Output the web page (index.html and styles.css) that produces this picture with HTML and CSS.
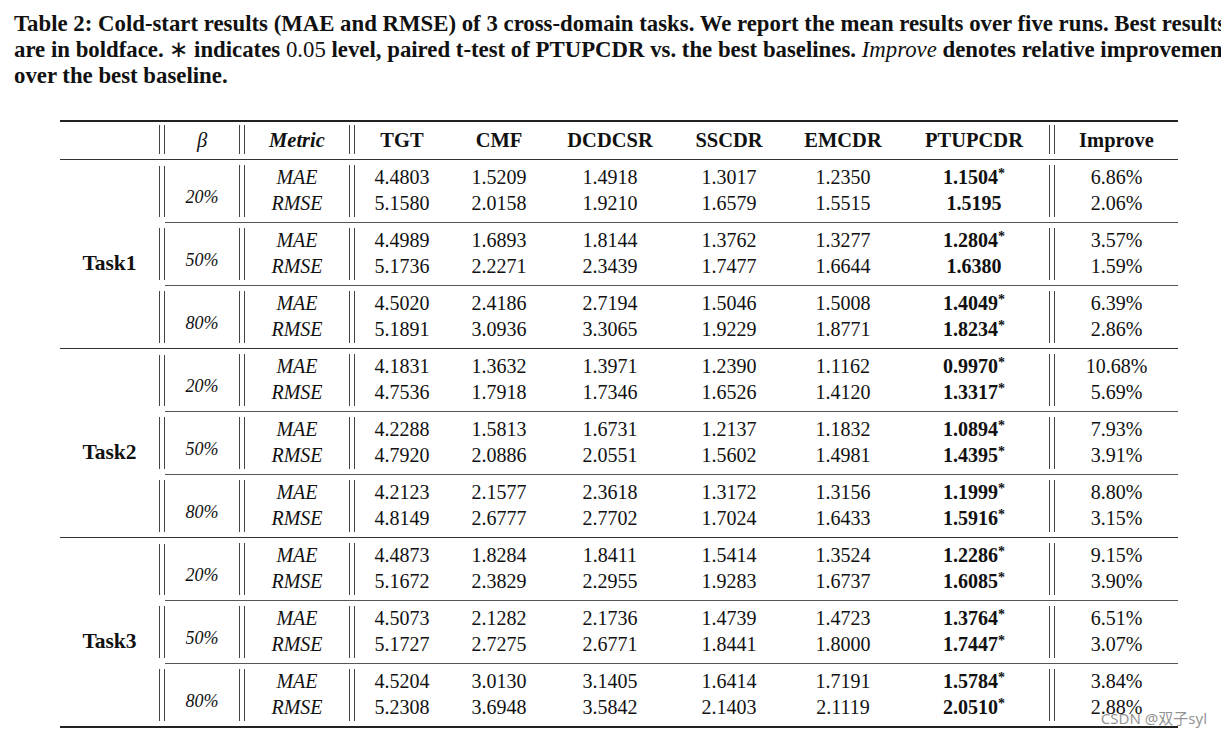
FILE: index.html
```html
<!DOCTYPE html>
<html>
<head>
<meta charset="utf-8">
<link rel="stylesheet" href="styles.css">
</head>
<body>
<p class="caption">
<span class="line">Table 2: Cold-start results (MAE and RMSE) of 3 cross-domain tasks. We report the mean results over five runs. Best results</span>
<span class="line">are in boldface. <span class="reg">∗</span> indicates <span class="reg">0.05</span> level, paired t-test of PTUPCDR vs. the best baselines. <i class="reg">Improve</i> denotes relative improvement</span>
<span class="line">over the best baseline.</span>
</p>
<div class="tbl">
  <div class="hdr">
    <div></div><div class="dbl"></div><div class="h it">β</div><div class="dbl"></div><div class="h b it">Metric</div><div class="dbl"></div>
    <div class="h b">TGT</div><div class="h b">CMF</div><div class="h b">DCDCSR</div><div class="h b">SSCDR</div><div class="h b">EMCDR</div><div class="h b">PTUPCDR</div><div class="dbl"></div><div class="h b">Improve</div>
  </div>

  <div class="task">
    <div class="tlabel">Task1</div>
    <div class="groups">
      <div class="grp"><div class="dbl"></div><div class="cells">
        <div class="beta">20%</div><div class="dbl"></div><div class="val it">MAE<br>RMSE</div><div class="dbl"></div>
        <div class="val">4.4803<br>5.1580</div><div class="val">1.5209<br>2.0158</div><div class="val">1.4918<br>1.9210</div><div class="val">1.3017<br>1.6579</div><div class="val">1.2350<br>1.5515</div><div class="val b">1.1504<sup>*</sup><br>1.5195</div><div class="dbl"></div><div class="val">6.86%<br>2.06%</div>
      </div></div>
      <div class="grp"><div class="dbl"></div><div class="cells">
        <div class="beta">50%</div><div class="dbl"></div><div class="val it">MAE<br>RMSE</div><div class="dbl"></div>
        <div class="val">4.4989<br>5.1736</div><div class="val">1.6893<br>2.2271</div><div class="val">1.8144<br>2.3439</div><div class="val">1.3762<br>1.7477</div><div class="val">1.3277<br>1.6644</div><div class="val b">1.2804<sup>*</sup><br>1.6380</div><div class="dbl"></div><div class="val">3.57%<br>1.59%</div>
      </div></div>
      <div class="grp"><div class="dbl"></div><div class="cells">
        <div class="beta">80%</div><div class="dbl"></div><div class="val it">MAE<br>RMSE</div><div class="dbl"></div>
        <div class="val">4.5020<br>5.1891</div><div class="val">2.4186<br>3.0936</div><div class="val">2.7194<br>3.3065</div><div class="val">1.5046<br>1.9229</div><div class="val">1.5008<br>1.8771</div><div class="val b">1.4049<sup>*</sup><br>1.8234<sup>*</sup></div><div class="dbl"></div><div class="val">6.39%<br>2.86%</div>
      </div></div>
    </div>
  </div>

  <div class="task">
    <div class="tlabel">Task2</div>
    <div class="groups">
      <div class="grp"><div class="dbl"></div><div class="cells">
        <div class="beta">20%</div><div class="dbl"></div><div class="val it">MAE<br>RMSE</div><div class="dbl"></div>
        <div class="val">4.1831<br>4.7536</div><div class="val">1.3632<br>1.7918</div><div class="val">1.3971<br>1.7346</div><div class="val">1.2390<br>1.6526</div><div class="val">1.1162<br>1.4120</div><div class="val b">0.9970<sup>*</sup><br>1.3317<sup>*</sup></div><div class="dbl"></div><div class="val">10.68%<br>5.69%</div>
      </div></div>
      <div class="grp"><div class="dbl"></div><div class="cells">
        <div class="beta">50%</div><div class="dbl"></div><div class="val it">MAE<br>RMSE</div><div class="dbl"></div>
        <div class="val">4.2288<br>4.7920</div><div class="val">1.5813<br>2.0886</div><div class="val">1.6731<br>2.0551</div><div class="val">1.2137<br>1.5602</div><div class="val">1.1832<br>1.4981</div><div class="val b">1.0894<sup>*</sup><br>1.4395<sup>*</sup></div><div class="dbl"></div><div class="val">7.93%<br>3.91%</div>
      </div></div>
      <div class="grp"><div class="dbl"></div><div class="cells">
        <div class="beta">80%</div><div class="dbl"></div><div class="val it">MAE<br>RMSE</div><div class="dbl"></div>
        <div class="val">4.2123<br>4.8149</div><div class="val">2.1577<br>2.6777</div><div class="val">2.3618<br>2.7702</div><div class="val">1.3172<br>1.7024</div><div class="val">1.3156<br>1.6433</div><div class="val b">1.1999<sup>*</sup><br>1.5916<sup>*</sup></div><div class="dbl"></div><div class="val">8.80%<br>3.15%</div>
      </div></div>
    </div>
  </div>

  <div class="task">
    <div class="tlabel">Task3</div>
    <div class="groups">
      <div class="grp"><div class="dbl"></div><div class="cells">
        <div class="beta">20%</div><div class="dbl"></div><div class="val it">MAE<br>RMSE</div><div class="dbl"></div>
        <div class="val">4.4873<br>5.1672</div><div class="val">1.8284<br>2.3829</div><div class="val">1.8411<br>2.2955</div><div class="val">1.5414<br>1.9283</div><div class="val">1.3524<br>1.6737</div><div class="val b">1.2286<sup>*</sup><br>1.6085<sup>*</sup></div><div class="dbl"></div><div class="val">9.15%<br>3.90%</div>
      </div></div>
      <div class="grp"><div class="dbl"></div><div class="cells">
        <div class="beta">50%</div><div class="dbl"></div><div class="val it">MAE<br>RMSE</div><div class="dbl"></div>
        <div class="val">4.5073<br>5.1727</div><div class="val">2.1282<br>2.7275</div><div class="val">2.1736<br>2.6771</div><div class="val">1.4739<br>1.8441</div><div class="val">1.4723<br>1.8000</div><div class="val b">1.3764<sup>*</sup><br>1.7447<sup>*</sup></div><div class="dbl"></div><div class="val">6.51%<br>3.07%</div>
      </div></div>
      <div class="grp"><div class="dbl"></div><div class="cells">
        <div class="beta">80%</div><div class="dbl"></div><div class="val it">MAE<br>RMSE</div><div class="dbl"></div>
        <div class="val">4.5204<br>5.2308</div><div class="val">3.0130<br>3.6948</div><div class="val">3.1405<br>3.5842</div><div class="val">1.6414<br>2.1403</div><div class="val">1.7191<br>2.1119</div><div class="val b">1.5784<sup>*</sup><br>2.0510<sup>*</sup></div><div class="dbl"></div><div class="val">3.84%<br>2.88%</div>
      </div></div>
    </div>
  </div>
</div>
<div class="wm">CSDN @双子syl</div>
</body>
</html>
```

FILE: styles.css
```css
html, body {
  margin: 0;
  padding: 0;
  background: #fff;
}
body {
  color: #111;
  font-family: "Liberation Serif", "Times New Roman", serif;
  overflow: hidden;
  width: 1221px;
  height: 734px;
  position: relative;
}
.caption {
  margin: 0;
  padding: 11px 0 0 14px;
  font-weight: bold;
  font-size: 22.8px;
  line-height: 26px;
  height: 78px;
}
.caption .line {
  display: block;
  white-space: nowrap;
}
.caption .reg {
  font-weight: normal;
}
.tbl {
  margin: 31px 0 0 60px;
  width: 1118px;
  border-top: 2px solid #222;
  border-bottom: 2px solid #222;
  font-size: 20px;
}
.hdr {
  display: grid;
  grid-template-columns: 99px 6px 74px 6px 104px 6px 94px 100px 122px 116px 112px 150px 6px 123px;
  height: 37px;
  border-bottom: 1px solid #333;
  align-items: center;
}
.h {
  text-align: center;
  font-size: 20.5px;
}
.dbl {
  border-left: 1px solid #444;
  border-right: 1px solid #444;
  box-sizing: border-box;
}
.hdr .dbl {
  align-self: stretch;
  margin: 3px 0 5px;
}
.task {
  display: flex;
}
.task + .task {
  border-top: 1px solid #333;
}
.tlabel {
  width: 99px;
  flex: none;
  font-weight: bold;
  font-size: 21.5px;
  display: flex;
  align-items: center;
  justify-content: center;
  padding-top: 18px;
  box-sizing: border-box;
}
.groups {
  flex: 1;
}
.grp {
  display: flex;
}
.grp > .dbl {
  width: 6px;
  flex: none;
  margin: 6px 0 5px;
}
.cells {
  flex: 1;
  display: grid;
  grid-template-columns: 74px 6px 104px 6px 94px 100px 122px 116px 112px 150px 6px 123px;
  height: 62px;
}
.grp + .grp .cells {
  border-top: 1px solid #555;
}
.cells .dbl {
  margin: 5px 0 5px;
}
.val {
  text-align: center;
  padding-top: 4px;
  line-height: 26px;
}
.beta {
  text-align: center;
  padding-top: 24px;
  line-height: 26px;
  font-size: 18px;
  font-style: italic;
}
.it {
  font-style: italic;
}
.b {
  font-weight: bold;
}
sup {
  font-size: 0.7em;
  vertical-align: 0.45em;
  line-height: 0;
}
.wm {
  position: absolute;
  right: 14px;
  bottom: 6px;
  font-family: "Noto Sans", "Noto Sans CJK SC", sans-serif;
  font-size: 15px;
  color: rgba(110, 110, 110, 0.75);
}
```
